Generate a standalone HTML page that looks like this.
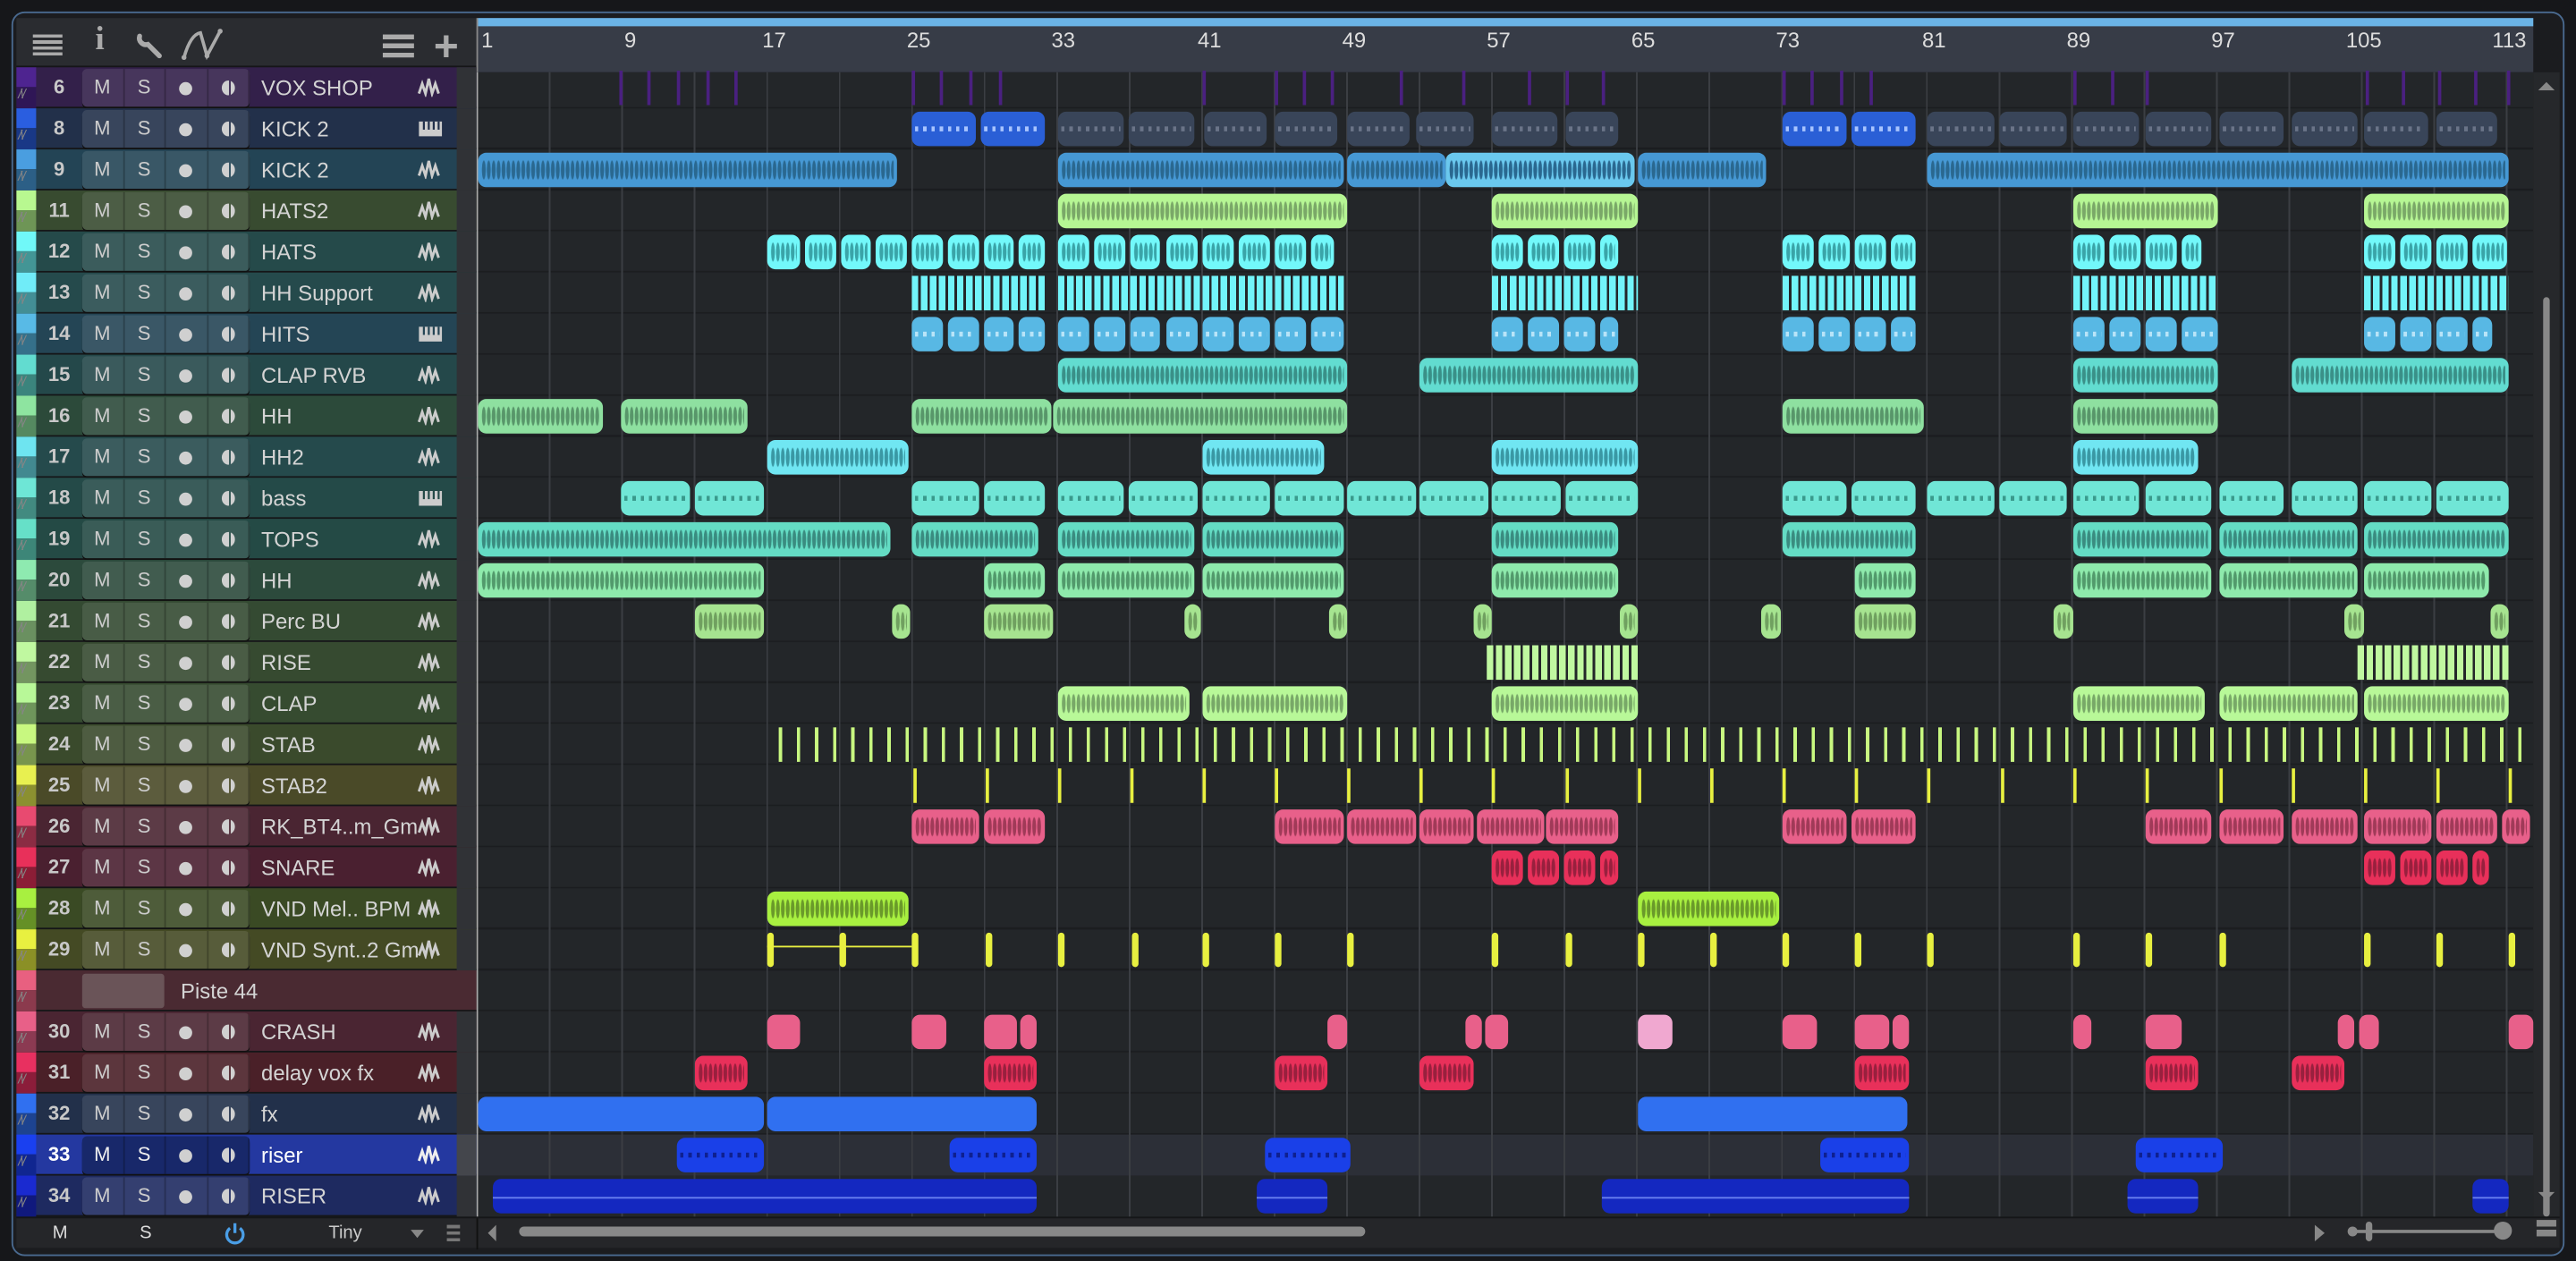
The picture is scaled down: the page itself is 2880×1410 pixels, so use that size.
<!DOCTYPE html>
<html><head><meta charset="utf-8"><style>
*{margin:0;padding:0;box-sizing:border-box}
html,body{width:2880px;height:1410px;overflow:hidden;background:#141517}
#s{position:absolute;left:0;top:0;width:1568px;height:768px;transform-origin:0 0;transform:scale(1.83673,1.83594);font-family:"Liberation Sans",sans-serif;background:#16171a}
.frame{position:absolute;left:7px;top:7px;width:1554px;height:758px;border:1.5px solid #4a6a90;border-radius:8px;background:#1b1c1f}
.top{position:absolute;left:10px;top:11px;width:280px;height:31px;background:#2a2c30;border-bottom:2px solid #151618}
.ruler{position:absolute;left:290px;top:11px;width:1252px;height:33px;background:#373c47;border-left:1px solid #888}
.rbar{position:absolute;left:0;top:0;width:100%;height:5px;background:#6ab3e6}
.num{position:absolute;top:6px;font-size:13px;color:#ddd}
.arr{position:absolute;left:290px;top:44px;width:1252px;height:697px;background:#232629;border-left:1px solid #aaa}
.vs{position:absolute;left:1542px;top:44px;width:16px;height:697px;background:#26282b}
.h{position:absolute;left:10px;width:280px;height:25px;background:var(--b);border-bottom:1px solid #151618}
.h .st{position:absolute;left:0;top:0;width:12px;height:12px;background:var(--c)}
.h .st2{position:absolute;left:0;top:12px;width:12px;height:13px;background:var(--c);filter:brightness(.6)}
.h .st2:after{content:"/\\/";position:absolute;left:1px;top:0px;font-size:8px;color:#ddd;letter-spacing:-1px}
.h b{position:absolute;left:12px;width:28px;top:5px;text-align:center;font-size:12px;color:#c8c8c8}
.h .bt{position:absolute;left:40px;top:1px;width:102px;height:23px;display:flex;border-radius:3px;overflow:hidden;background:rgba(255,255,255,.1);box-shadow:0 1px 0 #111}
.h .bt u{flex:1;position:relative;text-decoration:none;text-align:center;font-size:12px;line-height:23px;color:#ccc;border-right:1px solid rgba(0,0,0,.25)}
.h .bt u:nth-child(3),.h .bt u:nth-child(4){font-size:0}
.h .bt u:nth-child(3):after{content:"";position:absolute;left:50%;top:50%;width:8px;height:8px;margin:-4px 0 0 -4px;border-radius:50%;background:#d0d0d0}
.h .bt u:nth-child(4):after{content:"";position:absolute;left:50%;top:50%;width:8px;height:9px;margin:-4.5px 0 0 -4px;border-radius:50%;background:linear-gradient(90deg,#d0d0d0 0 55%,transparent 55% 70%,#d0d0d0 70%)}
.h em{position:absolute;left:149px;top:5px;font-style:normal;font-size:13px;color:#d4d4d4;white-space:nowrap}
.h svg{position:absolute;left:244px;top:6px}
.h .sc{position:absolute;left:268px;top:0;width:12px;height:25px;background:#303236}
.a{position:absolute;left:0;width:1568px;height:25px}
.a i{position:absolute;top:2px;height:21px;border-radius:5px;background:var(--c);overflow:hidden}
.a i:after{content:"";position:absolute;left:2px;right:2px;top:12%;bottom:12%;background:radial-gradient(ellipse at center,var(--d) 0 50%,transparent 58%) 0 0/3px 100% repeat-x}
.a.nw i:after{display:none}
.a.ln i{border-radius:0;background:repeating-linear-gradient(90deg,var(--c) 0 4px,transparent 4px 5.5px)}
.a.ln i:after{display:none}
.a.mid i:after{top:45%;bottom:45%;background:repeating-linear-gradient(90deg,var(--d) 0 2px,transparent 2px 5px)}
.a.th i{width:2px;border-radius:0}
.a.th i:after{display:none}
.bot{position:absolute;left:10px;top:741px;width:1548px;height:19px;background:#252629;border-top:1px solid #151618}
</style></head><body><div id="s">
<div class="frame"></div>
<div class="top">
<div style="position:absolute;left:10px;top:10px;width:18px;height:13px;background:repeating-linear-gradient(180deg,#aaa 0 2px,transparent 2px 3.6px)"></div>
<div style="position:absolute;left:48px;top:2px;font-size:20px;font-weight:bold;color:#aaa;font-family:'Liberation Serif',serif">i</div>
<svg style="position:absolute;left:72px;top:8px" width="18" height="18" viewBox="0 0 18 18"><path d="M3 3 a4 4 0 0 0 5 5 l7 7" stroke="#aaa" stroke-width="3" fill="none" stroke-linecap="round"/></svg>
<svg style="position:absolute;left:100px;top:6px" width="28" height="20" viewBox="0 0 28 20"><path d="M2 18 Q6 4 12 3 L16 17 L24 2" stroke="#aaa" stroke-width="2" fill="none"/><circle cx="2" cy="18" r="1.5" fill="#aaa"/><circle cx="16" cy="17" r="1.5" fill="#aaa"/><circle cx="24" cy="2" r="1.5" fill="#aaa"/></svg>
<div style="position:absolute;left:223px;top:10px;width:19px;height:14px;background:linear-gradient(#aaa 0 3px,transparent 3px 5.5px,#aaa 5.5px 8.5px,transparent 8.5px 11px,#aaa 11px)"></div>
<div style="position:absolute;left:254px;top:4px;font-size:26px;line-height:26px;color:#aaa;font-weight:bold">+</div>
</div>
<div class="ruler"><div class="rbar"></div>
<span class="num" style="left:2px">1</span><span class="num" style="left:89px">9</span><span class="num" style="left:173px">17</span><span class="num" style="left:261px">25</span><span class="num" style="left:349px">33</span><span class="num" style="left:438px">41</span><span class="num" style="left:526px">49</span><span class="num" style="left:614px">57</span><span class="num" style="left:702px">65</span><span class="num" style="left:790px">73</span><span class="num" style="left:879px">81</span><span class="num" style="left:967px">89</span><span class="num" style="left:1055px">97</span><span class="num" style="left:1137px">105</span><span class="num" style="left:1226px">113</span>
<div style="position:absolute;left:0;top:25px;width:1252px;height:8px;background:repeating-linear-gradient(90deg,transparent 0 44px,#ddd 44px 45px,transparent 45px 44.12px);background-size:44.12px 8px;background-position:0.5px 0"></div>
</div>
<div class="arr">
<div style="position:absolute;left:0;top:0;width:100%;height:100%;background:repeating-linear-gradient(180deg,transparent 0 24px,#1b1d20 24px 25px);background-position:0 -3px"></div>
<div style="position:absolute;left:0;top:647px;width:100%;height:25px;background:#2c2f37"></div>
<div style="position:absolute;left:0;top:0;width:100%;height:100%;background:repeating-linear-gradient(90deg,transparent 0 43.1px,#3b3e43 43.1px 44.12px)"></div>
</div>
<div class="vs"><div style="position:absolute;left:3px;top:6px;width:0;height:0;border-left:5px solid transparent;border-right:5px solid transparent;border-bottom:5px solid #888"></div><div style="position:absolute;left:6px;top:137px;width:4px;height:560px;background:#888;border-radius:2px"></div><div style="position:absolute;left:3px;top:682px;width:0;height:0;border-left:5px solid transparent;border-right:5px solid transparent;border-top:5px solid #888"></div></div>

<!-- headers -->
<div class="h" style="top:41px;--c:#4e2490;--b:#33204a"><i class="st"></i><i class="st2"></i><b>6</b><span class="bt"><u>M</u><u>S</u><u>●</u><u>◐</u></span><em>VOX SHOP</em><svg width="16" height="12"><path d="M1 10L3 4L5 10L7 1L9 10L11 4L13 10" stroke="#ccc" stroke-width="1.6" fill="none"/></svg><i class="sc"></i></div>
<div class="h" style="top:66px;--c:#2a5ee0;--b:#22304a"><i class="st"></i><i class="st2"></i><b>8</b><span class="bt"><u>M</u><u>S</u><u>●</u><u>◐</u></span><em>KICK 2</em><svg width="16" height="12"><path d="M1 2h14v9H1z" fill="#ccc"/><path d="M4 2v5M7 2v5M10 2v5M13 2v5" stroke="#22304a" stroke-width="1.2"/></svg><i class="sc"></i></div>
<div class="h" style="top:91px;--c:#4a9ee0;--b:#234455"><i class="st"></i><i class="st2"></i><b>9</b><span class="bt"><u>M</u><u>S</u><u>●</u><u>◐</u></span><em>KICK 2</em><svg width="16" height="12"><path d="M1 10L3 4L5 10L7 1L9 10L11 4L13 10" stroke="#ccc" stroke-width="1.6" fill="none"/></svg><i class="sc"></i></div>
<div class="h" style="top:116px;--c:#b8f890;--b:#384b30"><i class="st"></i><i class="st2"></i><b>11</b><span class="bt"><u>M</u><u>S</u><u>●</u><u>◐</u></span><em>HATS2</em><svg width="16" height="12"><path d="M1 10L3 4L5 10L7 1L9 10L11 4L13 10" stroke="#ccc" stroke-width="1.6" fill="none"/></svg><i class="sc"></i></div>
<div class="h" style="top:141px;--c:#70f8f8;--b:#254a4a"><i class="st"></i><i class="st2"></i><b>12</b><span class="bt"><u>M</u><u>S</u><u>●</u><u>◐</u></span><em>HATS</em><svg width="16" height="12"><path d="M1 10L3 4L5 10L7 1L9 10L11 4L13 10" stroke="#ccc" stroke-width="1.6" fill="none"/></svg><i class="sc"></i></div>
<div class="h" style="top:166px;--c:#70ecf8;--b:#254a4c"><i class="st"></i><i class="st2"></i><b>13</b><span class="bt"><u>M</u><u>S</u><u>●</u><u>◐</u></span><em>HH Support</em><svg width="16" height="12"><path d="M1 10L3 4L5 10L7 1L9 10L11 4L13 10" stroke="#ccc" stroke-width="1.6" fill="none"/></svg><i class="sc"></i></div>
<div class="h" style="top:191px;--c:#58bae6;--b:#244555"><i class="st"></i><i class="st2"></i><b>14</b><span class="bt"><u>M</u><u>S</u><u>●</u><u>◐</u></span><em>HITS</em><svg width="16" height="12"><path d="M1 2h14v9H1z" fill="#ccc"/><path d="M4 2v5M7 2v5M10 2v5M13 2v5" stroke="#244555" stroke-width="1.2"/></svg><i class="sc"></i></div>
<div class="h" style="top:216px;--c:#62dcd0;--b:#24484a"><i class="st"></i><i class="st2"></i><b>15</b><span class="bt"><u>M</u><u>S</u><u>●</u><u>◐</u></span><em>CLAP RVB</em><svg width="16" height="12"><path d="M1 10L3 4L5 10L7 1L9 10L11 4L13 10" stroke="#ccc" stroke-width="1.6" fill="none"/></svg><i class="sc"></i></div>
<div class="h" style="top:241px;--c:#8ee4a0;--b:#2c4a3a"><i class="st"></i><i class="st2"></i><b>16</b><span class="bt"><u>M</u><u>S</u><u>●</u><u>◐</u></span><em>HH</em><svg width="16" height="12"><path d="M1 10L3 4L5 10L7 1L9 10L11 4L13 10" stroke="#ccc" stroke-width="1.6" fill="none"/></svg><i class="sc"></i></div>
<div class="h" style="top:266px;--c:#6ee4f0;--b:#254a4c"><i class="st"></i><i class="st2"></i><b>17</b><span class="bt"><u>M</u><u>S</u><u>●</u><u>◐</u></span><em>HH2</em><svg width="16" height="12"><path d="M1 10L3 4L5 10L7 1L9 10L11 4L13 10" stroke="#ccc" stroke-width="1.6" fill="none"/></svg><i class="sc"></i></div>
<div class="h" style="top:291px;--c:#6ee6d6;--b:#244a48"><i class="st"></i><i class="st2"></i><b>18</b><span class="bt"><u>M</u><u>S</u><u>●</u><u>◐</u></span><em>bass</em><svg width="16" height="12"><path d="M1 2h14v9H1z" fill="#ccc"/><path d="M4 2v5M7 2v5M10 2v5M13 2v5" stroke="#244a48" stroke-width="1.2"/></svg><i class="sc"></i></div>
<div class="h" style="top:316px;--c:#66e0c8;--b:#244a45"><i class="st"></i><i class="st2"></i><b>19</b><span class="bt"><u>M</u><u>S</u><u>●</u><u>◐</u></span><em>TOPS</em><svg width="16" height="12"><path d="M1 10L3 4L5 10L7 1L9 10L11 4L13 10" stroke="#ccc" stroke-width="1.6" fill="none"/></svg><i class="sc"></i></div>
<div class="h" style="top:341px;--c:#8eeab0;--b:#2c4a3c"><i class="st"></i><i class="st2"></i><b>20</b><span class="bt"><u>M</u><u>S</u><u>●</u><u>◐</u></span><em>HH</em><svg width="16" height="12"><path d="M1 10L3 4L5 10L7 1L9 10L11 4L13 10" stroke="#ccc" stroke-width="1.6" fill="none"/></svg><i class="sc"></i></div>
<div class="h" style="top:366px;--c:#b0f0a0;--b:#344a32"><i class="st"></i><i class="st2"></i><b>21</b><span class="bt"><u>M</u><u>S</u><u>●</u><u>◐</u></span><em>Perc BU</em><svg width="16" height="12"><path d="M1 10L3 4L5 10L7 1L9 10L11 4L13 10" stroke="#ccc" stroke-width="1.6" fill="none"/></svg><i class="sc"></i></div>
<div class="h" style="top:391px;--c:#c0f8a0;--b:#364a30"><i class="st"></i><i class="st2"></i><b>22</b><span class="bt"><u>M</u><u>S</u><u>●</u><u>◐</u></span><em>RISE</em><svg width="16" height="12"><path d="M1 10L3 4L5 10L7 1L9 10L11 4L13 10" stroke="#ccc" stroke-width="1.6" fill="none"/></svg><i class="sc"></i></div>
<div class="h" style="top:416px;--c:#b8f898;--b:#364b30"><i class="st"></i><i class="st2"></i><b>23</b><span class="bt"><u>M</u><u>S</u><u>●</u><u>◐</u></span><em>CLAP</em><svg width="16" height="12"><path d="M1 10L3 4L5 10L7 1L9 10L11 4L13 10" stroke="#ccc" stroke-width="1.6" fill="none"/></svg><i class="sc"></i></div>
<div class="h" style="top:441px;--c:#c8f880;--b:#3a4a2c"><i class="st"></i><i class="st2"></i><b>24</b><span class="bt"><u>M</u><u>S</u><u>●</u><u>◐</u></span><em>STAB</em><svg width="16" height="12"><path d="M1 10L3 4L5 10L7 1L9 10L11 4L13 10" stroke="#ccc" stroke-width="1.6" fill="none"/></svg><i class="sc"></i></div>
<div class="h" style="top:466px;--c:#e8f050;--b:#4a4a28"><i class="st"></i><i class="st2"></i><b>25</b><span class="bt"><u>M</u><u>S</u><u>●</u><u>◐</u></span><em>STAB2</em><svg width="16" height="12"><path d="M1 10L3 4L5 10L7 1L9 10L11 4L13 10" stroke="#ccc" stroke-width="1.6" fill="none"/></svg><i class="sc"></i></div>
<div class="h" style="top:491px;--c:#e84a70;--b:#4a2532"><i class="st"></i><i class="st2"></i><b>26</b><span class="bt"><u>M</u><u>S</u><u>●</u><u>◐</u></span><em>RK_BT4..m_Gm</em><svg width="16" height="12"><path d="M1 10L3 4L5 10L7 1L9 10L11 4L13 10" stroke="#ccc" stroke-width="1.6" fill="none"/></svg><i class="sc"></i></div>
<div class="h" style="top:516px;--c:#e8305a;--b:#4a2030"><i class="st"></i><i class="st2"></i><b>27</b><span class="bt"><u>M</u><u>S</u><u>●</u><u>◐</u></span><em>SNARE</em><svg width="16" height="12"><path d="M1 10L3 4L5 10L7 1L9 10L11 4L13 10" stroke="#ccc" stroke-width="1.6" fill="none"/></svg><i class="sc"></i></div>
<div class="h" style="top:541px;--c:#a8f040;--b:#3a4a24"><i class="st"></i><i class="st2"></i><b>28</b><span class="bt"><u>M</u><u>S</u><u>●</u><u>◐</u></span><em>VND Mel.. BPM</em><svg width="16" height="12"><path d="M1 10L3 4L5 10L7 1L9 10L11 4L13 10" stroke="#ccc" stroke-width="1.6" fill="none"/></svg><i class="sc"></i></div>
<div class="h" style="top:566px;--c:#e8f040;--b:#444a24"><i class="st"></i><i class="st2"></i><b>29</b><span class="bt"><u>M</u><u>S</u><u>●</u><u>◐</u></span><em>VND Synt..2 Gm</em><svg width="16" height="12"><path d="M1 10L3 4L5 10L7 1L9 10L11 4L13 10" stroke="#ccc" stroke-width="1.6" fill="none"/></svg><i class="sc"></i></div>
<div class="h" style="top:591px;--c:#e86080;--b:#4a2a32"><i class="st"></i><i class="st2"></i><span style="position:absolute;left:40px;top:2px;width:50px;height:21px;background:#6a5458;border-radius:2px"></span><em style="left:100px">Piste 44</em></div>
<div class="h" style="top:616px;--c:#e86088;--b:#4a2532"><i class="st"></i><i class="st2"></i><b>30</b><span class="bt"><u>M</u><u>S</u><u>●</u><u>◐</u></span><em>CRASH</em><svg width="16" height="12"><path d="M1 10L3 4L5 10L7 1L9 10L11 4L13 10" stroke="#ccc" stroke-width="1.6" fill="none"/></svg><i class="sc"></i></div>
<div class="h" style="top:641px;--c:#e83060;--b:#4a2028"><i class="st"></i><i class="st2"></i><b>31</b><span class="bt"><u>M</u><u>S</u><u>●</u><u>◐</u></span><em>delay vox fx</em><svg width="16" height="12"><path d="M1 10L3 4L5 10L7 1L9 10L11 4L13 10" stroke="#ccc" stroke-width="1.6" fill="none"/></svg><i class="sc"></i></div>
<div class="h" style="top:666px;--c:#3070f0;--b:#22304a"><i class="st"></i><i class="st2"></i><b>32</b><span class="bt"><u>M</u><u>S</u><u>●</u><u>◐</u></span><em>fx</em><svg width="16" height="12"><path d="M1 10L3 4L5 10L7 1L9 10L11 4L13 10" stroke="#ccc" stroke-width="1.6" fill="none"/></svg><i class="sc"></i></div>
<div class="h" style="top:691px;--c:#1a40f0;--b:#2438a0"><i class="st"></i><i class="st2"></i><b style="color:#fff">33</b><span class="bt" style="background:#18286a"><u style="color:#eee">M</u><u style="color:#eee">S</u><u style="color:#eee">●</u><u style="color:#eee">◐</u></span><em style="color:#fff">riser</em><svg width="16" height="12"><path d="M1 10L3 4L5 10L7 1L9 10L11 4L13 10" stroke="#eee" stroke-width="1.6" fill="none"/></svg><i class="sc" style="background:#44464c"></i></div>
<div class="h" style="top:716px;--c:#1a2ad0;--b:#1e2a60"><i class="st"></i><i class="st2"></i><b>34</b><span class="bt"><u>M</u><u>S</u><u>●</u><u>◐</u></span><em>RISER</em><svg width="16" height="12"><path d="M1 10L3 4L5 10L7 1L9 10L11 4L13 10" stroke="#ccc" stroke-width="1.6" fill="none"/></svg><i class="sc"></i></div>

<!-- clips -->
<div class="a th" style="top:41px;--c:#4a2080"><i style="left:377px"></i><i style="left:394px"></i><i style="left:412px"></i><i style="left:430px"></i><i style="left:447px"></i><i style="left:555px"></i><i style="left:572px"></i><i style="left:590px"></i><i style="left:608px"></i><i style="left:732px"></i><i style="left:776px"></i><i style="left:793px"></i><i style="left:810px"></i><i style="left:852px"></i><i style="left:890px"></i><i style="left:930px"></i><i style="left:953px"></i><i style="left:975px"></i><i style="left:1085px"></i><i style="left:1102px"></i><i style="left:1120px"></i><i style="left:1138px"></i><i style="left:1262px"></i><i style="left:1285px"></i><i style="left:1306px"></i><i style="left:1440px"></i><i style="left:1462px"></i><i style="left:1484px"></i><i style="left:1506px"></i><i style="left:1526px"></i></div>
<div class="a mid" style="top:66px;--c:#2a5fd6;--d:#a8c4ff"><i style="left:555px;width:39px"></i><i style="left:597px;width:39px"></i><i style="left:1085px;width:39px"></i><i style="left:1127px;width:39px"></i></div>
<div class="a mid" style="top:66px;--c:#394559;--d:#6a7488"><i style="left:644px;width:40px"></i><i style="left:687px;width:40px"></i><i style="left:733px;width:38px"></i><i style="left:776px;width:38px"></i><i style="left:820px;width:38px"></i><i style="left:862px;width:35px"></i><i style="left:908px;width:40px"></i><i style="left:953px;width:32px"></i><i style="left:1173px;width:41px"></i><i style="left:1217px;width:41px"></i><i style="left:1262px;width:40px"></i><i style="left:1306px;width:40px"></i><i style="left:1351px;width:39px"></i><i style="left:1395px;width:40px"></i><i style="left:1439px;width:39px"></i><i style="left:1483px;width:37px"></i></div>
<div class="a" style="top:91px;--c:#4698d4;--d:#2a6890"><i style="left:291px;width:255px"></i><i style="left:644px;width:174px"></i><i style="left:820px;width:60px"></i><i style="left:880px;width:115px;--c:#6ac8ee"></i><i style="left:997px;width:78px"></i><i style="left:1173px;width:354px"></i></div>
<div class="a" style="top:116px;--c:#b6f694;--d:#7aa868"><i style="left:644px;width:176px"></i><i style="left:908px;width:89px"></i><i style="left:1262px;width:88px"></i><i style="left:1439px;width:88px"></i></div>
<div class="a" style="top:141px;--c:#72f8fa;--d:#3aa4a8"><i style="left:467px;width:20px"></i><i style="left:490px;width:19px"></i><i style="left:512px;width:18px"></i><i style="left:533px;width:19px"></i><i style="left:555px;width:19px"></i><i style="left:577px;width:19px"></i><i style="left:599px;width:18px"></i><i style="left:620px;width:16px"></i><i style="left:644px;width:19px"></i><i style="left:666px;width:19px"></i><i style="left:688px;width:18px"></i><i style="left:710px;width:19px"></i><i style="left:732px;width:19px"></i><i style="left:754px;width:19px"></i><i style="left:776px;width:19px"></i><i style="left:798px;width:14px"></i><i style="left:908px;width:19px"></i><i style="left:930px;width:19px"></i><i style="left:952px;width:19px"></i><i style="left:974px;width:11px"></i><i style="left:1085px;width:19px"></i><i style="left:1107px;width:19px"></i><i style="left:1129px;width:19px"></i><i style="left:1151px;width:15px"></i><i style="left:1262px;width:19px"></i><i style="left:1284px;width:19px"></i><i style="left:1306px;width:19px"></i><i style="left:1328px;width:12px"></i><i style="left:1439px;width:19px"></i><i style="left:1461px;width:19px"></i><i style="left:1483px;width:19px"></i><i style="left:1505px;width:21px"></i></div>
<div class="a ln" style="top:166px;--c:#72f4fa"><i style="left:555px;width:81px"></i><i style="left:644px;width:174px"></i><i style="left:908px;width:89px"></i><i style="left:1085px;width:81px"></i><i style="left:1262px;width:88px"></i><i style="left:1439px;width:88px"></i></div>
<div class="a mid" style="top:191px;--c:#58b8e4;--d:#b8e4f8"><i style="left:555px;width:19px"></i><i style="left:577px;width:19px"></i><i style="left:599px;width:18px"></i><i style="left:620px;width:16px"></i><i style="left:644px;width:19px"></i><i style="left:666px;width:19px"></i><i style="left:688px;width:18px"></i><i style="left:710px;width:19px"></i><i style="left:732px;width:19px"></i><i style="left:754px;width:19px"></i><i style="left:776px;width:19px"></i><i style="left:798px;width:20px"></i><i style="left:908px;width:19px"></i><i style="left:930px;width:19px"></i><i style="left:952px;width:19px"></i><i style="left:974px;width:11px"></i><i style="left:1085px;width:19px"></i><i style="left:1107px;width:19px"></i><i style="left:1129px;width:19px"></i><i style="left:1151px;width:15px"></i><i style="left:1262px;width:19px"></i><i style="left:1284px;width:19px"></i><i style="left:1306px;width:19px"></i><i style="left:1328px;width:22px"></i><i style="left:1439px;width:19px"></i><i style="left:1461px;width:19px"></i><i style="left:1483px;width:19px"></i><i style="left:1505px;width:12px"></i></div>
<div class="a" style="top:216px;--c:#62dcd0;--d:#3a9088"><i style="left:644px;width:176px"></i><i style="left:864px;width:133px"></i><i style="left:1262px;width:88px"></i><i style="left:1395px;width:132px"></i></div>
<div class="a" style="top:241px;--c:#8ee0a0;--d:#58966a"><i style="left:291px;width:76px"></i><i style="left:378px;width:77px"></i><i style="left:555px;width:85px"></i><i style="left:641px;width:179px"></i><i style="left:1085px;width:86px"></i><i style="left:1262px;width:88px"></i></div>
<div class="a" style="top:266px;--c:#70e6f2;--d:#3a98a4"><i style="left:467px;width:86px"></i><i style="left:732px;width:74px"></i><i style="left:908px;width:89px"></i><i style="left:1262px;width:76px"></i></div>
<div class="a mid" style="top:291px;--c:#70e6d6;--d:#3a9a8c"><i style="left:378px;width:42px"></i><i style="left:423px;width:42px"></i><i style="left:555px;width:41px"></i><i style="left:599px;width:37px"></i><i style="left:644px;width:40px"></i><i style="left:687px;width:42px"></i><i style="left:732px;width:41px"></i><i style="left:776px;width:42px"></i><i style="left:820px;width:42px"></i><i style="left:864px;width:42px"></i><i style="left:908px;width:42px"></i><i style="left:953px;width:44px"></i><i style="left:1085px;width:39px"></i><i style="left:1127px;width:39px"></i><i style="left:1173px;width:41px"></i><i style="left:1217px;width:41px"></i><i style="left:1262px;width:40px"></i><i style="left:1306px;width:40px"></i><i style="left:1351px;width:39px"></i><i style="left:1395px;width:40px"></i><i style="left:1439px;width:41px"></i><i style="left:1483px;width:44px"></i></div>
<div class="a" style="top:316px;--c:#64dcc4;--d:#3a8c80"><i style="left:291px;width:251px"></i><i style="left:555px;width:77px"></i><i style="left:644px;width:83px"></i><i style="left:732px;width:86px"></i><i style="left:908px;width:77px"></i><i style="left:1085px;width:81px"></i><i style="left:1262px;width:84px"></i><i style="left:1351px;width:84px"></i><i style="left:1439px;width:88px"></i></div>
<div class="a" style="top:341px;--c:#8eeaac;--d:#529a6c"><i style="left:291px;width:174px"></i><i style="left:599px;width:37px"></i><i style="left:644px;width:83px"></i><i style="left:732px;width:86px"></i><i style="left:908px;width:77px"></i><i style="left:1129px;width:37px"></i><i style="left:1262px;width:84px"></i><i style="left:1351px;width:84px"></i><i style="left:1439px;width:76px"></i></div>
<div class="a" style="top:366px;--c:#a6e490;--d:#70a060"><i style="left:423px;width:42px"></i><i style="left:543px;width:11px"></i><i style="left:599px;width:42px"></i><i style="left:721px;width:10px"></i><i style="left:809px;width:11px"></i><i style="left:897px;width:11px"></i><i style="left:986px;width:11px"></i><i style="left:1072px;width:12px"></i><i style="left:1129px;width:37px"></i><i style="left:1250px;width:12px"></i><i style="left:1427px;width:12px"></i><i style="left:1516px;width:11px"></i></div>
<div class="a ln" style="top:391px;--c:#c0f8a0"><i style="left:905px;width:92px"></i><i style="left:1435px;width:92px"></i></div>
<div class="a" style="top:416px;--c:#b8f898;--d:#78a868"><i style="left:644px;width:80px"></i><i style="left:732px;width:88px"></i><i style="left:908px;width:89px"></i><i style="left:1262px;width:80px"></i><i style="left:1351px;width:84px"></i><i style="left:1439px;width:88px"></i></div>
<div class="a" style="top:441px"><div style="position:absolute;left:474px;top:2px;width:1062px;height:21px;background:repeating-linear-gradient(90deg,#c8f880 0 2px,transparent 2px 11.03px)"></div></div>
<div class="a th" style="top:466px;--c:#e8f040"><i style="left:556px"></i><i style="left:600px"></i><i style="left:644px"></i><i style="left:688px"></i><i style="left:732px"></i><i style="left:776px"></i><i style="left:820px"></i><i style="left:864px"></i><i style="left:908px"></i><i style="left:953px"></i><i style="left:997px"></i><i style="left:1041px"></i><i style="left:1085px"></i><i style="left:1129px"></i><i style="left:1173px"></i><i style="left:1218px"></i><i style="left:1262px"></i><i style="left:1306px"></i><i style="left:1351px"></i><i style="left:1395px"></i><i style="left:1439px"></i><i style="left:1483px"></i><i style="left:1527px"></i></div>
<div class="a" style="top:491px;--c:#e8608a;--d:#a03a58"><i style="left:555px;width:41px"></i><i style="left:599px;width:37px"></i><i style="left:776px;width:42px"></i><i style="left:820px;width:42px"></i><i style="left:864px;width:33px"></i><i style="left:899px;width:41px"></i><i style="left:941px;width:44px"></i><i style="left:1085px;width:39px"></i><i style="left:1127px;width:39px"></i><i style="left:1306px;width:40px"></i><i style="left:1351px;width:39px"></i><i style="left:1395px;width:40px"></i><i style="left:1439px;width:41px"></i><i style="left:1483px;width:37px"></i><i style="left:1523px;width:17px"></i></div>
<div class="a" style="top:516px;--c:#e8305a;--d:#98203e"><i style="left:908px;width:19px"></i><i style="left:930px;width:19px"></i><i style="left:952px;width:19px"></i><i style="left:974px;width:11px"></i><i style="left:1439px;width:19px"></i><i style="left:1461px;width:19px"></i><i style="left:1483px;width:19px"></i><i style="left:1505px;width:10px"></i></div>
<div class="a" style="top:541px;--c:#a8f040;--d:#6a9a2a"><i style="left:467px;width:86px"></i><i style="left:997px;width:86px"></i></div>
<div class="a nw" style="top:566px;--c:#e8f040"><div style="position:absolute;left:467px;top:10px;width:88px;height:1px;background:#e8f040"></div><i style="left:467px;width:4px"></i><i style="left:511px;width:4px"></i><i style="left:555px;width:4px"></i><i style="left:600px;width:4px"></i><i style="left:644px;width:4px"></i><i style="left:689px;width:4px"></i><i style="left:732px;width:4px"></i><i style="left:776px;width:4px"></i><i style="left:820px;width:4px"></i><i style="left:908px;width:4px"></i><i style="left:953px;width:4px"></i><i style="left:997px;width:4px"></i><i style="left:1041px;width:4px"></i><i style="left:1085px;width:4px"></i><i style="left:1129px;width:4px"></i><i style="left:1173px;width:4px"></i><i style="left:1262px;width:4px"></i><i style="left:1306px;width:4px"></i><i style="left:1351px;width:4px"></i><i style="left:1439px;width:4px"></i><i style="left:1483px;width:4px"></i><i style="left:1527px;width:4px"></i></div>
<div class="a nw" style="top:616px;--c:#e8608a"><i style="left:467px;width:20px"></i><i style="left:555px;width:21px"></i><i style="left:599px;width:20px"></i><i style="left:621px;width:10px"></i><i style="left:808px;width:12px"></i><i style="left:892px;width:10px"></i><i style="left:904px;width:14px"></i><i style="left:997px;width:21px;--c:#f0a8d0"></i><i style="left:1085px;width:21px"></i><i style="left:1129px;width:21px"></i><i style="left:1152px;width:10px"></i><i style="left:1262px;width:11px"></i><i style="left:1306px;width:22px"></i><i style="left:1423px;width:10px"></i><i style="left:1436px;width:12px"></i><i style="left:1527px;width:15px"></i></div>
<div class="a" style="top:641px;--c:#e8305a;--d:#98203e"><i style="left:423px;width:32px"></i><i style="left:599px;width:32px"></i><i style="left:776px;width:32px"></i><i style="left:864px;width:33px"></i><i style="left:1129px;width:33px"></i><i style="left:1306px;width:32px"></i><i style="left:1395px;width:32px"></i></div>
<div class="a nw" style="top:666px;--c:#3070f0"><i style="left:291px;width:174px"></i><i style="left:467px;width:164px"></i><i style="left:997px;width:164px"></i></div>
<div class="a mid" style="top:691px;--c:#1a40e8;--d:#0e2090"><i style="left:412px;width:53px"></i><i style="left:578px;width:53px"></i><i style="left:770px;width:52px"></i><i style="left:1108px;width:54px"></i><i style="left:1300px;width:53px"></i></div>
<div class="a nw" style="top:716px;--c:#1428c0"><i style="left:300px;width:331px"></i><i style="left:765px;width:43px"></i><i style="left:975px;width:187px"></i><i style="left:1295px;width:43px"></i><i style="left:1505px;width:22px"></i><div style="position:absolute;left:300px;top:13px;width:1227px;height:1px;background:linear-gradient(90deg,#6a80f0 0 331px,transparent 331px 465px,#6a80f0 465px 508px,transparent 508px 675px,#6a80f0 675px 862px,transparent 862px 995px,#6a80f0 995px 1038px,transparent 1038px 1205px,#6a80f0 1205px)"></div></div>

<div class="bot">
<span style="position:absolute;left:22px;top:3px;font-size:11px;color:#ddd">M</span>
<span style="position:absolute;left:75px;top:3px;font-size:11px;color:#ddd">S</span>
<svg style="position:absolute;left:126px;top:2px" width="14" height="14"><path d="M4 4A5 5 0 1 0 10 4M7 1v6" stroke="#4a9ee6" stroke-width="1.8" fill="none"/></svg>
<span style="position:absolute;left:190px;top:3px;font-size:11px;color:#ccc">Tiny</span>
<div style="position:absolute;left:240px;top:7px;border-left:4px solid transparent;border-right:4px solid transparent;border-top:5px solid #888"></div>
<div style="position:absolute;left:262px;top:4px;width:8px;height:10px;background:repeating-linear-gradient(180deg,#777 0 2px,transparent 2px 4px)"></div>
<div style="position:absolute;left:280px;top:0;width:1px;height:19px;background:#111"></div>
<div style="position:absolute;left:287px;top:4px;border-top:5px solid transparent;border-bottom:5px solid transparent;border-right:5px solid #888"></div>
<div style="position:absolute;left:306px;top:5px;width:515px;height:6px;background:#888;border-radius:3px"></div>
<div style="position:absolute;left:1399px;top:4px;border-top:5px solid transparent;border-bottom:5px solid transparent;border-left:6px solid #888"></div>
<div style="position:absolute;left:1421px;top:7px;width:93px;height:2px;background:#888"></div>
<div style="position:absolute;left:1419px;top:5px;width:6px;height:6px;border-radius:3px;background:#888"></div>
<div style="position:absolute;left:1430px;top:2px;width:4px;height:12px;border-radius:2px;background:#888"></div>
<div style="position:absolute;left:1508px;top:2px;width:11px;height:11px;border-radius:6px;background:#888"></div>
<div style="position:absolute;left:1534px;top:1px;width:12px;height:10px;background:linear-gradient(#888 0 4px,transparent 4px 6px,#888 6px)"></div>
</div>
</div></body></html>
